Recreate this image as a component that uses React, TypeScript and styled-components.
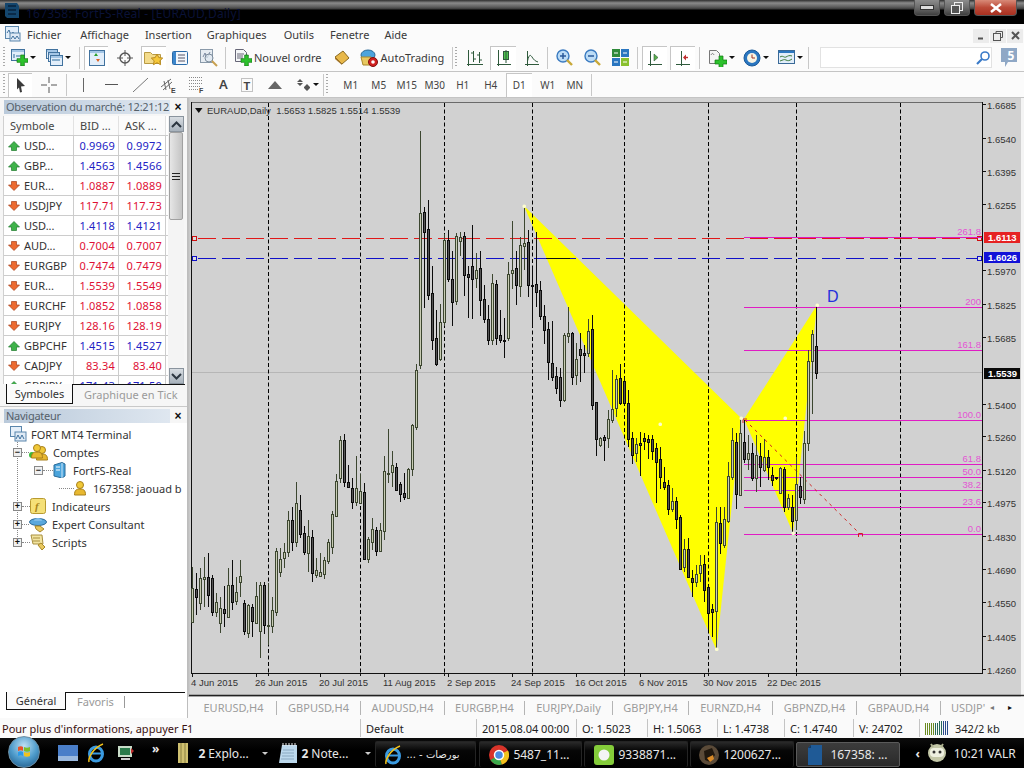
import React from "react";
import styled, { createGlobalStyle } from "styled-components";

const Global = createGlobalStyle`
  html, body { margin: 0; padding: 0; background: #fff; }
  svg { display: block; flex: none; }
`;
const UI = `"Noto Sans", "Liberation Sans", sans-serif`;

const Root = styled.div`
  width: 1024px; height: 768px; overflow: hidden; display: flex; flex-direction: column;
  font-family: ${UI}; font-size: 11px; color: #333; background: #fff;
`;
/* ---------- title ---------- */
const TitleBar = styled.div`
  height: 24px; flex: none; display: flex; align-items: flex-start; position: relative;
  background: linear-gradient(#2e2e2e 0, #8a8a8a 3px, #5c5c5c 7px, #3a3a3a 9px, #000 10px, #000 100%);
`;
const TitleText = styled.div`
  margin: 5px 0 0 6px; font-size: 12px; color: #0a1238; white-space: nowrap; letter-spacing: .2px;
`;
const WinButtons = styled.div`
  margin: 0 7px 0 auto; display: flex; gap: 4px; height: 16px;
`;
const WinBtn = styled.div<{ $w: number; $red?: boolean }>`
  width: ${p => p.$w}px; height: 16px; display: flex; align-items: center; justify-content: center;
  border: 1px solid #555; border-top: none; border-radius: 0 0 4px 4px; box-sizing: border-box;
  background: ${p => p.$red ? "linear-gradient(#d88a78,#bb4a38 50%,#a83020)" : "linear-gradient(#8c8c8c,#6c6c6c 50%,#3e3e3e)"};
`;
/* ---------- menu ---------- */
const MenuBar = styled.div`
  height: 20px; flex: none; display: flex; align-items: center; background: #fbfbfb; padding-left: 5px;
`;
const MenuItem = styled.span<{ $ml: number }>`
  margin-left: ${p => p.$ml}px; font-size: 11px; color: #3a3a3a; white-space: nowrap;
`;
const MdiBtns = styled.div`
  margin-left: auto; display: flex; gap: 1px; padding-right: 1px; margin-top: 3px;
`;
const MdiBtn = styled.div`
  width: 16px; height: 14px; background: #ececec; display: flex; align-items: center; justify-content: center;
`;
/* ---------- toolbars ---------- */
const Bar = styled.div<{ $h: number }>`
  height: ${p => p.$h}px; flex: none; display: flex; align-items: center; background: #fbfbfb;
  border-bottom: 1px solid #c4c4c4; box-sizing: border-box; position: relative;
`;
const Grip = styled.div<{ $ml: number }>`
  margin-left: ${p => p.$ml}px; width: 2px; height: 21px;
  background: repeating-linear-gradient(#aaa 0 1px, transparent 1px 3px);
`;
const Sep = styled.div<{ $ml: number }>`
  margin-left: ${p => p.$ml}px; width: 1px; height: 22px; background: #c8c8c8; flex: none;
`;
const Tool = styled.div<{ $ml: number }>`
  margin-left: ${p => p.$ml}px; display: flex; align-items: center; flex: none;
`;
const Toggle = styled.div<{ $ml: number; $w: number }>`
  margin-left: ${p => p.$ml}px; width: ${p => p.$w}px; height: 24px; box-sizing: border-box; flex: none;
  display: flex; align-items: center; justify-content: center;
  border-top: 1px solid #c6c6c6; border-left: 1px solid #c6c6c6; background: #fff;
`;
const Caret = styled.i`
  display: block; width: 0; height: 0; margin-left: 2px;
  border: 3px solid transparent; border-top: 3px solid #111; border-bottom: none;
`;
const ToolText = styled.span<{ $ml?: number }>`
  margin-left: ${p => p.$ml ?? 0}px; font-size: 11px; color: #3a3a3a; white-space: nowrap;
`;
const GlyphA = styled.span`
  font-weight: 600; font-size: 13px; color: #444; line-height: 1;
`;
const Period = styled.div<{ $w: number; $on?: boolean; $ml?: number }>`
  width: ${p => p.$w}px; height: 24px; display: flex; align-items: center; justify-content: center; flex: none;
  margin-left: ${p => p.$ml ?? 0}px;
  font-size: 10px; color: #444; box-sizing: border-box;
  ${p => p.$on ? "border-top:1px solid #c6c6c6;border-left:1px solid #c6c6c6;background:#fff;" : ""}
`;
const SearchBox = styled.div`
  position: absolute; left: 820px; top: 3px; width: 172px; height: 21px; box-sizing: border-box;
  background: #fff; border: 1px solid #e2e2e2; display: flex; align-items: center; justify-content: flex-end; padding-right: 1px;
`;
const ChatBadge = styled.div`
  position: absolute; left: 1000px; top: 4px; width: 22px; height: 21px; display: flex; align-items: flex-start; justify-content: center;
`;
const ChatNum = styled.span`
  position: absolute; top: 0; left: 0; width: 22px; text-align: center; color: #fff; font-size: 12px; font-weight: 700; line-height: 16px;
`;
/* ---------- main ---------- */
const Main = styled.div`
  height: 620px; flex: none; display: flex;
`;
const Side = styled.div`
  width: 188px; flex: none; display: flex; flex-direction: column; box-sizing: border-box; border-right: 1px solid #bdbdbd; background: #f6f6f6;
`;
const PanelHead = styled.div`
  margin-top: 2px; height: 14px; flex: none; display: flex; align-items: center; padding-left: 4px;
`;
const HeadTitle = styled.div`
  width: 166px; height: 14px; box-sizing: border-box; padding-left: 2px; line-height: 14px; font-size: 11px; color: #55606a; white-space: nowrap;
  letter-spacing: -.26px; background: linear-gradient(90deg, #b9c9da, #dfe7f0);
`;
const HeadClose = styled.div`
  margin-left: 2px; font-family: "Liberation Sans", sans-serif; font-size: 12px; font-weight: 700; color: #111; line-height: 14px; width: 12px; text-align: center;
`;
const Market = styled.div`
  height: 306px; flex: none; display: flex; flex-direction: column;
`;
const WatchArea = styled.div`
  height: 268px; margin: 2px 0 0 3px; display: flex; flex: none; overflow: hidden;
`;
const Table = styled.div`
  width: 165px; background: #fff; border-left: 1px solid #d0d0d0; box-sizing: border-box; flex: none;
`;
const Row = styled.div`
  display: grid; grid-template-columns: 70px 45px 47px; height: 20px; box-sizing: border-box; border-bottom: 1px solid #ccc;
`;
const HeadCell = styled.div`
  display: flex; align-items: center; padding-left: 6px; font-size: 11px; color: #444; border-right: 1px solid #e2e2e2; background: #fbfbfb; white-space: nowrap;
`;
const SymCell = styled.div`
  display: flex; align-items: center; gap: 4px; padding-left: 4px; font-size: 11px; color: #333; border-right: 1px solid #ccc;
`;
const NumCell = styled.div<{ $up: boolean }>`
  display: flex; align-items: center; justify-content: flex-end; padding-right: 3px; font-size: 11px; letter-spacing: .2px;
  color: ${p => p.$up ? "#2222c4" : "#de1034"}; border-right: 1px solid #ccc;
`;
const Scroll = styled.div`
  width: 16px; flex: none; display: flex; flex-direction: column; background: #f4f4f4; align-items: center;
`;
const ScrollBtn = styled.div`
  width: 15px; height: 16px; flex: none; background: linear-gradient(#d8dde2,#a8b2bc); border: 1px solid #8a949e; box-sizing: border-box; display: flex; align-items: center; justify-content: center;
`;
const Thumb = styled.div`
  width: 14px; height: 88px; flex: none; background: linear-gradient(90deg,#e6e6e6,#c4c4c4); border: 1px solid #a0a0a0; box-sizing: border-box; border-radius: 2px; margin-bottom: auto;
  display: flex; align-items: center; justify-content: center;
`;
const Tabs = styled.div`
  height: 20px; flex: none; display: flex; align-items: stretch; padding-left: 6px;
`;
const TabOn = styled.div<{ $w: number }>`
  width: ${p => p.$w}px; box-sizing: border-box; border: 1.5px solid #111; border-top: none; background: #fbfbfb; font-size: 11px; color: #333; display: flex; align-items: center; justify-content: center; flex: none;
`;
const TabRest = styled.div`
  flex: 1; border-top: 1.5px solid #111; margin-right: 2px; display: flex; align-items: center; padding-left: 11px; color: #9a9a9a; font-size: 11px; white-space: nowrap; gap: 10px;
`;
const TabBar = styled.i`
  width: 1px; height: 12px; background: #999; display: block;
`;
const Navigator = styled.div`
  flex: 1; display: flex; flex-direction: column; background: #fff; border-top: 1px solid #c9c9c9; margin-top: 2px; min-height: 0;
`;
const NavHeadWrap = styled.div`
  background: #f6f6f6; height: 16px; flex: none;
`;
const Tree = styled.div`
  flex: 1; padding-top: 2px; position: relative; min-height: 0;
`;
const TreeLine = styled.div`
  position: absolute; left: 17px; top: 10px; height: 110px; border-left: 1px dotted #888;
`;
const TreeRow = styled.div<{ $pad: number }>`
  height: 18px; display: flex; align-items: center; padding-left: ${p => p.$pad}px; white-space: nowrap; position: relative;
  font-size: 11px; color: #333;
`;
const Box = styled.div`
  width: 9px; height: 9px; box-sizing: border-box; border: 1px solid #888; background: #f0f0f0; display: flex; align-items: center; justify-content: center;
  font-size: 9px; line-height: 7px; color: #111; font-family: "Liberation Sans", sans-serif; flex: none; font-weight: 700;
`;
const Dots = styled.i<{ $w: number }>`
  display: block; width: ${p => p.$w}px; border-top: 1px dotted #888; flex: none;
`;
const TreeText = styled.span<{ $ml: number }>`
  margin-left: ${p => p.$ml}px;
`;
const NavTabs = styled.div`
  height: 18px; flex: none; display: flex; padding-left: 6px; margin-bottom: 8px;
`;
const ChartCol = styled.div`
  width: 836px; flex: none; display: flex; flex-direction: column;
`;
const ChartTabs = styled.div`
  height: 21px; flex: none; display: flex; align-items: center; background: #fafafa; position: relative;
`;
/* ---------- status ---------- */
const Status = styled.div`
  height: 20px; flex: none; display: flex; align-items: center; background: #fafafa;
`;
const StatusCell = styled.div<{ $w: number }>`
  width: ${p => p.$w}px; flex: none; height: 18px; box-sizing: border-box; padding-left: 5px; display: flex; align-items: center; gap: 6px;
  border-right: 1px solid #c4c4c4; font-size: 11px; color: #222; white-space: nowrap;
`;
const StatusFirst = styled(StatusCell)`
  padding-left: 2px; color: #3a1010;
`;
const StatusLast = styled(StatusCell)`
  border-right: none;
`;
/* ---------- taskbar ---------- */
const Taskbar = styled.div`
  height: 30px; flex: none; display: flex; align-items: center; background: linear-gradient(#0c0c0c,#000 40%); color: #eee; font-size: 12px; position: relative;
`;
const Orb = styled.div`
  margin-left: 8px; width: 32px; height: 32px; border-radius: 50%; flex: none; margin-top: -2px; display: flex; align-items: center; justify-content: center;
  background: radial-gradient(circle at 50% 30%, #bfe0f4, #4f9ccc 50%, #17507e); border: 1px solid #6c8ea4; box-sizing: border-box;
`;
const QuickIcon = styled.div<{ $ml: number }>`
  margin-left: ${p => p.$ml}px; flex: none; display: flex; align-items: center;
`;
const TaskText = styled.span<{ $ml?: number; $w?: number }>`
  margin-left: ${p => p.$ml ?? 0}px; white-space: nowrap; color: #e8e8e8; ${p => p.$w ? `width:${p.$w}px;` : ""}
`;
const Chevrons = styled(TaskText)`
  font-weight: 700; margin-top: -10px;
`;
const TrayArrow = styled(TaskText)`
  font-weight: 700;
`;
const ArabicText = styled(TaskText)`
  font-family: "DejaVu Sans", sans-serif; font-size: 10px;
`;
const TaskCaret = styled(Caret)`
  border-top-color: #ccc;
`;
const TaskBtn = styled.div<{ $ml: number; $w: number; $active?: boolean }>`
  margin-left: ${p => p.$ml}px; width: ${p => p.$w}px; height: ${p => p.$active ? 25 : 26}px; margin-top: 2px; box-sizing: border-box; flex: none;
  display: flex; align-items: center; border-radius: 2px;
  background: ${p => p.$active ? "linear-gradient(#3c3c3c,#2a2a2a)" : "linear-gradient(#2a2a2a,#060606 35%,#000)"};
  border: 1px solid ${p => p.$active ? "#5a5a5a" : "#242424"}; border-bottom: ${p => p.$active ? "1px solid #5a5a5a" : "none"};
`;

/* ---------- icons ---------- */
const Plus = ({ x = 6, y = 6, s = 10 }: { x?: number; y?: number; s?: number }) => {
  const a = s / 3;
  return <path d={`M${x + a} ${y}h${a}v${a}h${a}v${a}h-${a}v${a}h-${a}v-${a}h-${a}v-${a}h${a}z`} fill="#2cc12c" stroke="#137a13" strokeWidth=".7" />;
};
const Win = ({ x, y, w, h }: { x: number; y: number; w: number; h: number }) => (
  <g><rect x={x + .5} y={y + .5} width={w} height={h} fill="#e2eefa" stroke="#41729e" /><rect x={x + 1} y={y + 1} width={w - 1} height={2} fill="#a4c6e6" /></g>
);
const Ico = ({ s = 16, h, children }: { s?: number; h?: number; children: React.ReactNode }) => (
  <svg width={s} height={h ?? s} viewBox={`0 0 ${s} ${h ?? s}`} fill="none">{children}</svg>
);
const IconNew = () => <Ico s={17}><Win x={0} y={0} w={13} h={11} /><path d="M3 5v4M5 7h4" stroke="#2a6a9a" /><Plus x={6} y={6} s={11} /></Ico>;
const IconProfiles = () => <Ico s={17}><Win x={0} y={0} w={11} h={9} /><Win x={2} y={3} w={11} h={9} /><Win x={4} y={6} w={12} h={10} /><path d="M6 11h8" stroke="#2a6a9a" /></Ico>;
const IconMarket = () => <Ico><Win x={0} y={0} w={15} h={15} /><path d="M5 6l2-3 2 3z" fill="#2aa02a" /><path d="M7 9l2 3 2-3z" fill="#e06020" /></Ico>;
const IconCross = () => <Ico><circle cx="8" cy="8" r="5" stroke="#555" strokeWidth="1.4" /><path d="M8 0v6M8 10v6M0 8h6M10 8h6" stroke="#555" /></Ico>;
const IconFolderStar = () => <Ico s={20} h={18}><path d="M.5 3.5h6l2 2h8v9H.5z" fill="#f4dc8c" stroke="#b89a44" /><path d="M13 5l1.8 3.6 3.9.5-2.9 2.7.8 3.9-3.6-2-3.6 2 .8-3.9-2.9-2.7 3.9-.5z" fill="#f6c83a" stroke="#b88a20" /></Ico>;
const IconTerminal = () => <Ico><rect x=".5" y="1.5" width="15" height="13" rx="1" fill="#f2f6fb" stroke="#2a6aa8" /><rect x="1" y="2" width="3" height="12" fill="#3c86cc" /><path d="M6 5h7M6 8h7M6 11h7" stroke="#556" /></Ico>;
const IconTester = () => <Ico s={18}><rect x=".5" y=".5" width="12" height="13" fill="#e6ecf2" stroke="#8a9aaa" /><path d="M3 8l2-4 2 5 3-6" stroke="#7a88a0" /><circle cx="9" cy="9" r="4" fill="#dfe9f2" fillOpacity=".7" stroke="#7a8a9a" /><path d="M12 12l5 5" stroke="#c8a050" strokeWidth="2" /></Ico>;
const IconOrder = () => <Ico s={17}><path d="M.5.5h8l3 3v9H.5z" fill="#f4f6f8" stroke="#667" /><path d="M2 5h7M2 7h6M2 9h6" stroke="#667" /><Plus x={6} y={6} s={11} /></Ico>;
const IconBook = () => <Ico><path d="M1 7l8-6 6 7-7 6z" fill="#e8b84a" stroke="#8a6a20" /><path d="M1 7l7 7v1L1 9z" fill="#a6762a" /></Ico>;
const IconAuto = () => <Ico s={18}><ellipse cx="8" cy="6" rx="7" ry="5" fill="#4ca4dc" stroke="#2a6a98" /><path d="M1 8h10v8H3z" fill="#e8c860" stroke="#a88828" /><circle cx="13" cy="13" r="4.5" fill="#d02020" stroke="#801010" /><circle cx="13" cy="13" r="1.8" fill="#fff" /></Ico>;
const IconBars = () => <Ico><path d="M0 14.500h16M1.500 0v16M6.500 1v11M4 3h2.500M6.500 9H9M12.500 2v11M10 5h2.500M12.500 10H15" stroke="#2f5a3c" /></Ico>;
const IconCandle = () => <Ico s={14} h={16}><path d="M0 14.500h14M1.500 0v16" stroke="#2f5a3c" /><rect x="6.500" y="1.500" width="5" height="8" fill="#4ec24e" stroke="#2f5a3c" /><path d="M9 0v13" stroke="#2f5a3c" /></Ico>;
const IconLine = () => <Ico s={14} h={16}><path d="M0 14.500h14M2.500 1v15" stroke="#2f5a3c" /><path d="M2.500 11C4 5 5 4 7 7s3 4 6 5" stroke="#2f5a3c" /></Ico>;
const IconZoom = ({ plus }: { plus?: boolean }) => <Ico s={17}><circle cx="7" cy="7" r="6" fill="#bcdcf6" stroke="#3a7ac0" strokeWidth="1.4" /><path d={plus ? "M4 7h6M7 4v6" : "M4 7h6"} stroke="#2a5a9a" strokeWidth="1.5" /><path d="M11 11l5 5" stroke="#c8a838" strokeWidth="2.400" /></Ico>;
const IconTile = () => <Ico s={17}><rect x="0" y="0" width="8" height="8" fill="#2f8a3a" /><rect x="9" y="0" width="8" height="8" fill="#2a76c0" /><rect x="0" y="9" width="8" height="8" fill="#2a76c0" /><rect x="9" y="9" width="8" height="8" fill="#8ac02f" /><path d="M2 4h4M11 4h4M2 13h4M11 13h4" stroke="#fff" /></Ico>;
const IconScrollR = () => <Ico s={14} h={16}><path d="M0 14.500h14M2.500 1v15" stroke="#2f5a3c" /><path d="M6 4v7l4-3.500z" fill="#5ab04a" stroke="#2f5a3c" strokeWidth=".6" /></Ico>;
const IconShift = () => <Ico s={14} h={16}><path d="M0 14.500h14M5.500 1v15" stroke="#2f5a3c" /><path d="M12 7.500H8" stroke="#c03030" strokeWidth="1.4" /><path d="M7 7.500l3-3v6z" fill="#c03030" /></Ico>;
const IconTemplate = () => <Ico s={18}><path d="M.5 1.500h7l3 3v10H.5z" fill="#f4f4f4" stroke="#777" /><path d="M2 6c1-2 2-2 3 0" stroke="#777" /><Plus x={6} y={7} s={12} /></Ico>;
const IconClock = () => <Ico s={18}><circle cx="9" cy="9" r="8" fill="#2a76c0" stroke="#1a5a9a" /><circle cx="9" cy="9" r="5" fill="#f8f4e4" /><path d="M9 5.500V9h3" stroke="#a03020" /></Ico>;
const IconIndic = () => <Ico s={17}><rect x=".5" y="1.500" width="16" height="13" fill="#e2eefa" stroke="#3a6a98" /><rect x="1" y="2" width="15" height="2" fill="#2a76c0" /><path d="M2 8c3-2 4 1 6 0s3-2 6-1M2 12c3-1 4-2 6-1s3 1 6-1" stroke="#3a7a3a" /></Ico>;
const IconSearch = () => <Ico s={14}><circle cx="9" cy="5" r="4" stroke="#3a7ac8" strokeWidth="1.6" /><path d="M6 8l-5 5" stroke="#3a7ac8" strokeWidth="2.200" /></Ico>;
const IconChat = () => <Ico s={22} h={21}><path d="M1 0h16v14h-9l-3 5v-5H1z" fill="#8fa8c6" /></Ico>;
const IconCursor = () => <Ico s={10} h={16}><path d="M1 1l8 8-4 .5L6 15l-2 .5-1-5-2 2z" fill="#3a3a3a" /></Ico>;
const IconPlusThin = () => <Ico><path d="M8 0v6M8 10v6M0 8h6M10 8h6" stroke="#555" /></Ico>;
const IconVLine = () => <Ico s={3} h={14}><path d="M1.500 0v14" stroke="#666" /></Ico>;
const IconHLine = () => <Ico s={13} h={3}><path d="M0 1.500h13" stroke="#555" /></Ico>;
const IconTrend = () => <Ico s={15} h={14}><path d="M0 14L15 0" stroke="#777" /></Ico>;
const IconChannel = () => <Ico s={16}><path d="M0 10L10 2M2 13l9-8M3 4l2 9M7 3l2 9" stroke="#666" /><text x="10" y="15.500" fontSize="7" fontWeight="700" fill="#444" fontFamily="Liberation Sans">E</text></Ico>;
const IconFibo = () => <Ico s={16}><path d="M0 .5h14M0 3.500h14M0 6.500h14M0 9.500h12M0 12.500h10" stroke="#888" strokeDasharray="1 1" /><text x="10" y="16" fontSize="7" fontWeight="700" fill="#444" fontFamily="Liberation Sans">F</text></Ico>;
const IconT = () => <Ico s={12} h={14}><rect x=".5" y=".5" width="11" height="13" stroke="#888" strokeDasharray="1 1" /><text x="2.500" y="11.500" fontSize="11" fontWeight="700" fill="#444" fontFamily="Liberation Sans">T</text></Ico>;
const IconTri = () => <Ico s={14} h={8}><path d="M0 8L7 0l7 8z" fill="#666" /></Ico>;
const IconMarks = () => <Ico s={14}><path d="M0 4l3-3 3 3zM0 5h6L3 8zM7 9l3-3 3 3v1l-3 3-3-3z" fill="#555" /></Ico>;
const IconMenu = () => <Ico><rect x=".5" y=".5" width="13" height="12" fill="#e2eefa" stroke="#5a86ac" /><path d="M2 7l2-3 2 5 2-3 2 4" stroke="#41729e" /><rect x="5" y="7" width="10" height="8" fill="#dfeaf5" stroke="#5a86ac" /><path d="M6 13l2-3 2 3 2-3 2 3" stroke="#41729e" /></Ico>;
const Up = () => <Ico s={12}><path d="M6 1.500l5.500 5.500H8.500v3.500h-5V7H.5z" fill="#3fb34a" stroke="#1f7a2e" strokeWidth=".7" /></Ico>;
const Down = () => <Ico s={12}><path d="M6 10.500L.5 5h3V1.500h5V5h3z" fill="#ec6a30" stroke="#a8401a" strokeWidth=".7" /></Ico>;
const Chev = ({ up }: { up?: boolean }) => <Ico s={11} h={7}><path d={up ? "M1 6l4.500-4.500L10 6" : "M1 1l4.500 4.500L10 1"} stroke="#2c3640" strokeWidth="2" /></Ico>;
const NavMt = () => <Ico s={17}><rect x=".5" y=".5" width="11" height="10" fill="#e6f0fa" stroke="#5a86ac" /><rect x="5" y="6" width="11" height="9" fill="#dfeaf5" stroke="#5a86ac" /><path d="M6 13l2-4 2 4 2-4 2 4" stroke="#41729e" /></Ico>;
const Person = ({ x = 0, y = 0 }: { x?: number; y?: number }) => <g transform={`translate(${x} ${y})`}><circle cx="6" cy="4" r="3.500" fill="#f0c838" stroke="#a8801c" /><path d="M.5 14c0-5 2-6 5.500-6s5.500 1 5.500 6z" fill="#e8b830" stroke="#a8801c" /></g>;
const NavAcc = () => <Ico s={19} h={17}><circle cx="3" cy="11" r="3" fill="#3cba3c" /><Person x={7} y={2} /><Person x={2} y={0} /></Ico>;
const NavServer = () => <Ico s={13} h={16}><path d="M1 3l8-2.500 3 1.500v12l-3 2-8-2z" fill="#4aa4dc" stroke="#2a6a98" /><path d="M9 1v15" stroke="#cfe6f8" /><path d="M3 5h4M3 8h4" stroke="#fff" /></Ico>;
const NavUser = () => <Ico s={13} h={15}><Person x={0} y={0} /></Ico>;
const NavInd = () => <Ico s={16}><rect x=".5" y=".5" width="15" height="15" rx="2" fill="#f5e078" stroke="#b89a30" /><text x="5" y="12" fontSize="11" fontStyle="italic" fontWeight="700" fill="#a88418" fontFamily="Liberation Serif">f</text></Ico>;
const NavExpert = () => <Ico s={19} h={17}><ellipse cx="9" cy="6" rx="8.500" ry="3.500" fill="#5aa8dc" stroke="#2a6a98" /><path d="M5 5c0-4 8-4 8 0z" fill="#7fbce8" /><path d="M6 10l5 0 4 3-4 3-4-3z" fill="#e8c860" stroke="#a88828" /></Ico>;
const NavScript = () => <Ico s={16} h={17}><path d="M1 1h11l1 9H3z" fill="#f2e4a0" stroke="#a88f40" /><path d="M3 4h7M3 7h7" stroke="#a88f40" /><path d="M8 11l3-2 4 4-3 3z" fill="#e8c860" stroke="#a88828" /></Ico>;
const OrbFlag = () => <Ico s={14}><path d="M1 2c2-1 4-1 5 0v4c-1-1-3-1-5 0z" fill="#e8532a" /><path d="M7 2c2 1 4 1 6 0v4c-2 1-4 1-6 0z" fill="#7bbf2a" /><path d="M1 7c2-1 4-1 5 0v4c-1-1-3-1-5 0z" fill="#2a9ae8" /><path d="M7 7c2 1 4 1 6 0v4c-2 1-4 1-6 0z" fill="#f2c21c" /></Ico>;
const TbMonitor = () => <Ico s={20} h={16}><rect width="20" height="16" fill="#4a7ec8" /><rect y="11" width="20" height="5" fill="#9ab8de" /></Ico>;
const TbIE = () => <Ico s={18} h={20}><ellipse cx="9" cy="11" rx="6.500" ry="7" stroke="#3a9ae0" strokeWidth="3" /><path d="M3 10.500h12" stroke="#3a9ae0" strokeWidth="2" /><path d="M2 19C1 15 6 5 16 1" stroke="#f2c21c" strokeWidth="1.500" /></Ico>;
const TbScreen = () => <Ico><rect y="1" width="14" height="11" fill="#c8dcc8" /><rect x="2" y="3" width="10" height="7" fill="#2a7a4a" /><rect x="3" y="13" width="9" height="2" fill="#ccc" /><path d="M13 3l3 3-3 3z" fill="#c03030" /></Ico>;
const TbFolder = () => <Ico s={12} h={22}><rect x="1" y="1" width="10" height="20" fill="#cfc070" /><path d="M4 1v20M8 1v20" stroke="#8a8040" /></Ico>;
const TbNote = () => <Ico s={19} h={22}><path d="M3 3h15v18H0z" fill="#bcd8ec" /><path d="M4 1v3M7 1v3M10 1v3M13 1v3M16 1v3" stroke="#eee" /><path d="M4 8h11M3 11h12M3 14h12M2 17h13" stroke="#8aa8c0" /></Ico>;
const TbChrome = () => <Ico s={20}><circle cx="10" cy="10" r="10" fill="#d8342a" /><path d="M10 10L1.500 15A10 10 0 0 0 13 19.500z" fill="#3aa84a" /><path d="M10 10l3 9.500A10 10 0 0 0 19 5.500z" fill="#f2c21c" /><circle cx="10" cy="10" r="4.500" fill="#4a8ae0" stroke="#fff" strokeWidth="1.500" /></Ico>;
const TbGreen = () => <Ico s={20}><rect width="20" height="20" rx="3" fill="#84cc3a" /><circle cx="10" cy="10" r="5.500" fill="#f4f4f4" /></Ico>;
const TbPhoto = () => <Ico s={20}><circle cx="10" cy="10" r="10" fill="#5a4a38" /><path d="M5 6l8-3 3 7-5 7-5-2z" fill="#20180f" /><path d="M8 13l6-3 1 4-4 3z" fill="#d88a28" /></Ico>;
const TbDoc = () => <Ico s={16} h={22}><path d="M4 2h11v20H1V5z" fill="#1f5a96" /><path d="M4 2v3H1z" fill="#123a66" /></Ico>;
const TbSmile = () => <Ico s={20}><circle cx="10" cy="10" r="9" fill="#c4c8a8" /><rect x="3" y="5" width="14" height="9" rx="4" fill="#eef0e0" /><circle cx="7" cy="9" r="1.500" fill="#333" /><circle cx="13" cy="9" r="1.500" fill="#333" /><path d="M4 1l2 3M16 1l-2 3" stroke="#aeb290" strokeWidth="2" /></Ico>;
const TbSig = () => <Ico s={24} h={14}>{Array.from({ length: 12 }).map((_, i) => <rect key={i} x={i * 2} y={i < 7 ? 2 : 0} width="1" height={i < 7 ? 12 : 14} fill={i < 5 ? "#6a8a20" : i < 9 ? "#2a6a5a" : "#2a4a8a"} />)}</Ico>;

/* ---------- chart data ---------- */
type C = [number, number, number, number, number];
const Z8: C[] = [[560,625,725,730,1],[580,628,652,705,0],[565,595,668,690,1],[530,590,597,680,1],[518,590,645,680,0],[585,595,695,708,0],[640,665,695,712,1],[652,685,730,758,1],[618,688,700,742,0],[565,615,710,710,1],[540,615,665,690,0],[590,637,662,675,1],[540,587,607,650,1],[660,670,752,765,0],[672,676,758,775,1],[672,682,722,772,0],[605,648,728,732,1],[605,615,752,835,1],[605,615,735,762,0],[610,735,738,795,1],[650,690,738,758,1],[505,513,697,708,1],[505,537,575,590,1],[490,515,535,563,1],[393,420,515,530,1],[380,420,485,513,0],[307,370,487,500,1],[345,390,462,475,0],[438,460,515,525,0],[420,468,518,575,1],[450,472,578,605,0],[535,570,585,595,1],[520,577,587,592,1],[530,540,583,597,1],[478,486,542,552,1],[392,403,500,522,1],[282,304,409,410,1],[168,181,293,310,1],[163,181,307,320,0],[255,307,320,325,0],[295,325,365,387,0],[228,325,365,378,1],[282,334,368,372,1],[310,337,537,540,0],[470,478,538,550,1],[415,448,486,510,1],[440,450,513,528,0],[430,450,512,515,1],[228,274,452,480,1],[148,278,279,308,1],[213,256,275,322,1],[250,262,329,330,0],[305,313,343,365,0],[280,340,350,360,0],[265,267,353,355,1],[132,135,268,288,1]];
const Z7: C[] = [[798,817,986,996,1],[98,345,800,812,1],[327,342,403,630,0],[307,393,590,605,0],[505,585,727,755,0],[637,720,797,803,0],[618,672,782,790,1],[408,425,673,685,1],[395,425,542,552,0],[460,543,613,685,0],[405,415,610,620,1],[403,417,430,475,1],[403,415,532,595,0],[505,528,536,660,0],[380,505,542,662,0],[465,515,540,570,1],[458,510,607,655,0],[560,603,662,675,0],[620,662,725,740,0]];
const Z9: C[] = [[252,280,450,465,1],[270,283,443,465,0],[360,436,450,458,0],[385,450,452,505,0],[215,253,443,452,1],[92,240,250,298,1],[183,235,285,345,0],[140,165,287,320,1],[52,160,168,240,1],[120,155,285,320,0],[230,285,287,410,0],[125,283,305,350,0],[272,300,378,390,0],[345,378,420,462,0],[395,418,516,570,0],[393,520,560,572,0],[530,557,595,612,0],[535,562,630,650,0],[430,435,630,635,1],[350,430,437,458,1],[425,430,560,585,0],[458,508,555,585,1],[430,477,494,577,0],[465,490,494,548,0],[388,423,490,500,1],[375,418,645,660,0],[635,635,748,797,0],[740,743,765,770,1],[735,740,750,812,0],[660,688,745,775,1],[540,658,690,700,1],[555,567,655,680,1],[522,565,640,645,0],[560,573,640,648,0]];
const Z11: C[] = [[-30,10,118,140,0],[97,115,165,193,0],[115,132,158,185,1],[97,130,134,228,0],[100,113,122,150,0],[105,116,125,178,0],[105,117,152,180,0],[130,145,185,308,0],[140,176,230,268,0],[200,247,260,270,0],[240,256,326,345,0],[265,304,326,335,1],[292,304,356,388,0],[345,352,508,510,0],[418,448,500,515,1],[415,448,530,535,0],[510,533,545,590,0],[495,522,545,560,1],[465,495,518,545,1],[465,492,570,605,0],[555,562,638,690,0],[612,628,635,710,0],[320,367,632,745,1],[322,369,430,462,0],[322,358,435,445,1],[185,228,362,370,1],[85,120,230,240,1],[100,125,282,328,0],[55,98,284,285,1],[60,125,177,190,0],[105,158,178,210,1],[130,160,235,243,0],[105,165,235,275,1],[130,168,200,260,0],[118,170,210,215,1],[150,172,200,240,0],[200,225,240,258,0],[230,232,234,240,0],[200,205,278,280,1],[200,207,322,335,0],[282,295,322,330,1],[285,322,362,395,0],[170,252,360,390,1],[230,257,290,312,0],[92,128,297,312,1]];
const conv = (a: C[], off: number): C[] => a.map(c => [off + c[0] / 3, off + c[1] / 3, off + c[2] / 3, off + c[3] / 3, c[4]] as C);
const CANDLES: C[] = [...conv(Z8, 380), ...conv(Z7, 98), ...conv(Z9, 190), ...conv(Z11, 400), [350, 361, 443, 451, 1], [330, 334, 361, 414, 1], [304, 346, 373, 379, 0]];
const VDASH = [268, 360, 444, 532, 624, 708, 796, 900];
const PRICES: [string, number][] = [["1.6685",105],["1.6540",139],["1.6395",172],["1.6255",205],["1.5970",271],["1.5825",305],["1.5685",338],["1.5400",405],["1.5260",437],["1.5120",471],["1.4975",503],["1.4830",537],["1.4690",570],["1.4550",603],["1.4405",637],["1.4260",670]];
const FIBS: [string, number][] = [["261.8",237.5],["200",307.5],["161.8",350.5],["100.0",420.5],["61.8",464.5],["50.0",477.5],["38.2",490.5],["23.6",507.5],["0.0",534.5]];
const DATES: [string, number][] = [["4 Jun 2015",191],["26 Jun 2015",255],["20 Jul 2015",319],["11 Aug 2015",383],["2 Sep 2015",447],["24 Sep 2015",511],["16 Oct 2015",575],["6 Nov 2015",639],["30 Nov 2015",703],["22 Dec 2015",767]];
const AX = `"Liberation Sans", sans-serif`;

const PriceTag = ({ y, v, bg }: { y: number; v: string; bg: string }) => (
  <g><rect x="984" y={y - 5} width="36" height="11" fill={bg} /><text x="988" y={y + 4} fill="#fff" fontSize="9.500" fontWeight="700" fontFamily={AX}>{v}</text></g>
);
const Chart = () => (
  <svg width="836" height="599" viewBox="188 98 836 599" style={{ background: "#d1d1d1" }}>
    <rect x="188" y="98" width="1.500" height="599" fill="#c0c0c0" />
    <path d="M1022.500 98v599" stroke="#f4f4f4" strokeWidth="3" />
    <path d="M191 102.500h792" stroke="#6a6a6a" />
    <path d="M191.500 102v571M982.500 102v571M191 673.500h792" stroke="#111" />
    <path d="M192 372.500h790" stroke="#b6b6b6" />
    <polygon points="524,206 741,418 716.500,650" fill="#ffff00" />
    <polygon points="744,419 817,305 793,533" fill="#ffff00" />
    {VDASH.map(x => <path key={x} d={`M${x + .5} 103v570`} stroke="#000" strokeDasharray="4 2.500" />)}
    <path d="M192 238.500h790" stroke="#e01818" strokeDasharray="18 6" strokeDashoffset="-6" />
    <path d="M192 258.500h790" stroke="#1010c8" strokeDasharray="18 6" strokeDashoffset="-6" />
    <path d="M546 258.500h24" stroke="#111" />
    <rect x="192.500" y="236.500" width="4" height="4" fill="#ddd" stroke="#d01010" />
    <rect x="192.500" y="256.500" width="4" height="4" fill="#ddd" stroke="#1010c8" />
    <rect x="977.500" y="236.500" width="4" height="4" fill="#ddd" stroke="#d01010" />
    <rect x="977.500" y="256.500" width="4" height="4" fill="#ddd" stroke="#1010c8" />
    {FIBS.map(([t, y]) => (
      <g key={t}>
        <path d={`M744 ${y}h238`} stroke="#e01cc4" />
        <text x="981" y={y - 3} textAnchor="end" fontSize="9.500" fill="#e454d4" fontFamily={AX}>{t}</text>
      </g>
    ))}
    <path d="M745 420L860 534" stroke="#d02020" strokeDasharray="3 4" fill="none" />
    <path d="M743 423v-4h4M858.500 537v-3.500h4v3" stroke="#d02020" fill="none" />
    {CANDLES.map((c, i) => {
      const x = 192 + 4 * i;
      const up = c[4] === 1;
      const col = up ? "#3c4630" : "#0c0c0c";
      const top = Math.round(c[1]), bot = Math.max(Math.round(c[2]), top + 1);
      return (
        <g key={i}>
          <path d={`M${x + .5} ${Math.round(c[0])}V${Math.round(c[3])}`} stroke={col} />
          <rect x={x - .5} y={top + .5} width="2" height={bot - top} fill={up ? "#c8ccb4" : "#555"} stroke={col} />
        </g>
      );
    })}
    {[[524, 206], [741, 418], [716.500, 649], [660, 424], [785, 418], [793, 533], [817, 305]].map(([x, y], i) => <rect key={i} x={x - 1.500} y={y - 1.500} width="3.500" height="3.500" rx="1.500" fill="#fdfdd0" />)}
    <text x="827" y="302" fontSize="16" fill="#2430dc" fontFamily={AX}>D</text>
    <path d="M195 108h7.500l-3.750 5z" fill="#111" />
    <text x="207" y="114" fontSize="9.500" fill="#333" fontFamily={AX} xmlSpace="preserve">EURAUD,Daily  1.5653 1.5825 1.5514 1.5539</text>
    {PRICES.map(([t, y]) => (
      <g key={t}><path d={`M983 ${y - .5}h3`} stroke="#111" /><text x="987" y={y + 3.500} fontSize="9.500" fill="#333" fontFamily={AX}>{t}</text></g>
    ))}
    <PriceTag y={237} v="1.6113" bg="#e62222" />
    <PriceTag y={257} v="1.6026" bg="#1212d8" />
    <PriceTag y={373} v="1.5539" bg="#0a0a0a" />
    {DATES.map(([t, x]) => (
      <g key={t}><path d={`M${x + 1.500} 674v3`} stroke="#111" /><text x={x} y="686" fontSize="9.500" fill="#333" fontFamily={AX}>{t}</text></g>
    ))}
    {VDASH.map(x => <path key={x} d={`M${x + .5} 674v2`} stroke="#111" />)}
    <path d="M189 695.500h835" stroke="#222" strokeWidth="1.500" />
  </svg>
);

const ROWS: [string, string, string, boolean][] = [["USD...","0.9969","0.9972",true],["GBP...","1.4563","1.4566",true],["EUR...","1.0887","1.0889",false],["USDJPY","117.71","117.73",false],["USD...","1.4118","1.4121",true],["AUD...","0.7004","0.7007",false],["EURGBP","0.7474","0.7479",false],["EUR...","1.5539","1.5549",false],["EURCHF","1.0852","1.0858",false],["EURJPY","128.16","128.19",false],["GBPCHF","1.4515","1.4527",true],["CADJPY","83.34","83.40",false],["GBPJPY","171.43","171.50",true]];
const MENUS: [string, number][] = [["Fichier",6],["Affichage",19],["Insertion",16],["Graphiques",15],["Outils",17],["Fenetre",16],["Aide",15]];

const TabCell = styled.div<{ $w: number; $pad?: number }>`
  width: ${p => p.$w}px; flex: none; box-sizing: border-box; height: 14px; line-height: 14px; text-align: center; border-right: 1px solid #b4b4b4;
  padding-left: ${p => p.$pad ?? 0}px; color: #9c9c9c; font-size: 11px; white-space: nowrap;
`;
const TabEnd = styled.div`
  margin-left: 10px; color: #9c9c9c; font-size: 11px; width: 38px; overflow: hidden; white-space: nowrap;
`;
const TabArrows = styled.div`
  margin-left: 1px; display: flex; gap: 14px; font-size: 8px; font-family: "DejaVu Sans", sans-serif; color: #777;
`;
const TabArrowDark = styled.span` color: #111; `;

export default function App() {
  return (
    <Root>
      <Global />
      <TitleBar>
        <Tool $ml={4}><svg width="16" height="18" viewBox="0 0 16 18"><path d="M1 3h12l2 3v12H3l-2-2z" fill="#14466e" /><path d="M4 6h8M4 10h8M4 14h8" stroke="#0a2a48" strokeWidth="2" /></svg></Tool>
        <TitleText>167358: FortFS-Real - [EURAUD,Daily]</TitleText>
        <WinButtons>
          <WinBtn $w={26}><svg width="14" height="5"><rect x=".5" y=".5" width="13" height="4" fill="#ddd" stroke="#333" /></svg></WinBtn>
          <WinBtn $w={26}><svg width="12" height="12" fill="none"><rect x="3.500" y=".5" width="8" height="8" stroke="#eee" /><rect x=".5" y="3.500" width="8" height="8" fill="#555" stroke="#eee" /></svg></WinBtn>
          <WinBtn $w={43} $red><svg width="12" height="10"><path d="M1 1l10 8M11 1L1 9" stroke="#fff" strokeWidth="2.500" /></svg></WinBtn>
        </WinButtons>
      </TitleBar>

      <MenuBar>
        <IconMenu />
        {MENUS.map(([t, m]) => <MenuItem key={t} $ml={m}>{t}</MenuItem>)}
        <MdiBtns>
          <MdiBtn><svg width="8" height="8"><path d="M1 6.500h5" stroke="#555" strokeWidth="2" /></svg></MdiBtn>
          <MdiBtn><svg width="10" height="10" fill="none"><path d="M3 2.500V.5h6.500v6H7.500" stroke="#555" /><rect x=".5" y="2.500" width="7" height="7" stroke="#555" /></svg></MdiBtn>
          <MdiBtn><svg width="9" height="9"><path d="M1 1l7 7M8 1L1 8" stroke="#555" strokeWidth="2" /></svg></MdiBtn>
        </MdiBtns>
      </MenuBar>

      <Bar $h={28}>
        <Grip $ml={3} />
        <Tool $ml={6}><IconNew /><Caret /></Tool>
        <Tool $ml={10}><IconProfiles /><Caret /></Tool>
        <Sep $ml={8} />
        <Toggle $ml={4} $w={24}><IconMarket /></Toggle>
        <Tool $ml={9}><IconCross /></Tool>
        <Toggle $ml={8} $w={25}><IconFolderStar /></Toggle>
        <Tool $ml={6}><IconTerminal /></Tool>
        <Tool $ml={12}><IconTester /></Tool>
        <Sep $ml={7} />
        <Tool $ml={9}><IconOrder /><ToolText $ml={2}>Nouvel ordre</ToolText></Tool>
        <Tool $ml={12}><IconBook /></Tool>
        <Tool $ml={10}><IconAuto /><ToolText $ml={3}>AutoTrading</ToolText></Tool>
        <Sep $ml={8} />
        <Grip $ml={2} />
        <Tool $ml={10}><IconBars /></Tool>
        <Toggle $ml={7} $w={26}><IconCandle /></Toggle>
        <Tool $ml={9}><IconLine /></Tool>
        <Sep $ml={8} />
        <Tool $ml={8}><IconZoom plus /></Tool>
        <Tool $ml={11}><IconZoom /></Tool>
        <Tool $ml={11}><IconTile /></Tool>
        <Sep $ml={8} />
        <Toggle $ml={4} $w={25}><IconScrollR /></Toggle>
        <Toggle $ml={3} $w={25}><IconShift /></Toggle>
        <Sep $ml={4} />
        <Tool $ml={9}><IconTemplate /><Caret /></Tool>
        <Tool $ml={8}><IconClock /><Caret /></Tool>
        <Tool $ml={9}><IconIndic /><Caret /></Tool>
        <Sep $ml={5} />
        <SearchBox><IconSearch /></SearchBox>
        <ChatBadge><IconChat /><ChatNum>5</ChatNum></ChatBadge>
      </Bar>

      <Bar $h={26}>
        <Grip $ml={3} />
        <Toggle $ml={3} $w={24}><IconCursor /></Toggle>
        <Tool $ml={9}><IconPlusThin /></Tool>
        <Sep $ml={9} />
        <Tool $ml={15}><IconVLine /></Tool>
        <Tool $ml={20}><IconHLine /></Tool>
        <Tool $ml={15}><IconTrend /></Tool>
        <Tool $ml={13}><IconChannel /></Tool>
        <Tool $ml={12}><IconFibo /></Tool>
        <Tool $ml={14}><GlyphA>A</GlyphA></Tool>
        <Tool $ml={13}><IconT /></Tool>
        <Tool $ml={15}><IconTri /></Tool>
        <Tool $ml={15}><IconMarks /><Caret /></Tool>
        <Sep $ml={4} />
        <Grip $ml={2} />
        <Period $w={28} $ml={9}>M1</Period>
        <Period $w={28}>M5</Period>
        <Period $w={28}>M15</Period>
        <Period $w={28}>M30</Period>
        <Period $w={28}>H1</Period>
        <Period $w={28}>H4</Period>
        <Period $w={26} $on $ml={1}>D1</Period>
        <Period $w={28} $ml={2}>W1</Period>
        <Period $w={26}>MN</Period>
        <Sep $ml={3} />
      </Bar>

      <Main>
        <Side>
          <Market>
            <PanelHead><HeadTitle>Observation du marché: 12:21:12</HeadTitle><HeadClose>×</HeadClose></PanelHead>
            <WatchArea>
              <Table>
                <Row><HeadCell>Symbole</HeadCell><HeadCell>BID ...</HeadCell><HeadCell>ASK ...</HeadCell></Row>
                {ROWS.map((r, i) => (
                  <Row key={i}>
                    <SymCell>{r[3] ? <Up /> : <Down />}{r[0]}</SymCell>
                    <NumCell $up={r[3]}>{r[1]}</NumCell>
                    <NumCell $up={r[3]}>{r[2]}</NumCell>
                  </Row>
                ))}
              </Table>
              <Scroll>
                <ScrollBtn><Chev up /></ScrollBtn>
                <Thumb><svg width="8" height="7"><path d="M0 .5h8M0 3.500h8M0 6.500h8" stroke="#222" /></svg></Thumb>
                <ScrollBtn><Chev /></ScrollBtn>
              </Scroll>
            </WatchArea>
            <Tabs>
              <TabOn $w={67}>Symboles</TabOn>
              <TabRest>Graphique en Tick</TabRest>
            </Tabs>
          </Market>
          <Navigator>
            <NavHeadWrap>
              <PanelHead><HeadTitle>Navigateur</HeadTitle><HeadClose>×</HeadClose></PanelHead>
            </NavHeadWrap>
            <Tree>
              <TreeLine />
              <TreeRow $pad={10}><NavMt /><TreeText $ml={4}>FORT MT4 Terminal</TreeText></TreeRow>
              <TreeRow $pad={13}><Box>−</Box><Dots $w={7} /><NavAcc /><TreeText $ml={5}>Comptes</TreeText></TreeRow>
              <TreeRow $pad={34}><Box>−</Box><Dots $w={10} /><NavServer /><TreeText $ml={7}>FortFS-Real</TreeText></TreeRow>
              <TreeRow $pad={59}><Dots $w={15} /><NavUser /><TreeText $ml={6}>167358: jaouad b</TreeText></TreeRow>
              <TreeRow $pad={13}><Box>+</Box><Dots $w={8} /><NavInd /><TreeText $ml={6}>Indicateurs</TreeText></TreeRow>
              <TreeRow $pad={13}><Box>+</Box><Dots $w={7} /><NavExpert /><TreeText $ml={4}>Expert Consultant</TreeText></TreeRow>
              <TreeRow $pad={13}><Box>+</Box><Dots $w={8} /><NavScript /><TreeText $ml={6}>Scripts</TreeText></TreeRow>
            </Tree>
            <NavTabs>
              <TabOn $w={60}>Général</TabOn>
              <TabRest>Favoris<TabBar /></TabRest>
            </NavTabs>
          </Navigator>
        </Side>
        <ChartCol>
          <Chart />
          <ChartTabs>
            <TabCell $w={89} $pad={3}>EURUSD,H4</TabCell>
            <TabCell $w={84}>GBPUSD,H4</TabCell>
            <TabCell $w={84}>AUDUSD,H4</TabCell>
            <TabCell $w={80}>EURGBP,H4</TabCell>
            <TabCell $w={88}>EURJPY,Daily</TabCell>
            <TabCell $w={76}>GBPJPY,H4</TabCell>
            <TabCell $w={84}>EURNZD,H4</TabCell>
            <TabCell $w={84}>GBPNZD,H4</TabCell>
            <TabCell $w={84}>GBPAUD,H4</TabCell>
            <TabEnd>USDJP'</TabEnd>
            <TabArrows><span>◂</span><TabArrowDark>▸</TabArrowDark></TabArrows>
          </ChartTabs>
        </ChartCol>
      </Main>

      <Status>
        <StatusFirst $w={361}>Pour plus d'informations, appuyer F1</StatusFirst>
        <StatusCell $w={116}>Default</StatusCell>
        <StatusCell $w={100}>2015.08.04 00:00</StatusCell>
        <StatusCell $w={71}>O: 1.5023</StatusCell>
        <StatusCell $w={70}>H: 1.5063</StatusCell>
        <StatusCell $w={67}>L: 1.4738</StatusCell>
        <StatusCell $w={69}>C: 1.4740</StatusCell>
        <StatusCell $w={66}>V: 24702</StatusCell>
        <StatusLast $w={104}><TbSig />342/2 kb</StatusLast>
      </Status>

      <Taskbar>
        <Orb><OrbFlag /></Orb>
        <QuickIcon $ml={18}><TbMonitor /></QuickIcon>
        <QuickIcon $ml={9}><TbIE /></QuickIcon>
        <QuickIcon $ml={13}><TbScreen /></QuickIcon>
        <Chevrons $ml={18}>»</Chevrons>
        <QuickIcon $ml={18}><TbFolder /></QuickIcon>
        <TaskText $ml={9} $w={62}><b>2</b> Explo...</TaskText>
        <TaskCaret />
        <QuickIcon $ml={11}><TbNote /></QuickIcon>
        <TaskText $ml={3} $w={62}><b>2</b> Note...</TaskText>
        <TaskCaret />
        <TaskBtn $ml={4} $w={101}>
          <QuickIcon $ml={8}><TbIE /></QuickIcon>
          <ArabicText $ml={4}>... - بورصات</ArabicText>
        </TaskBtn>
        <TaskBtn $ml={3} $w={103}>
          <QuickIcon $ml={9}><TbChrome /></QuickIcon>
          <TaskText $ml={4}>5487_11...</TaskText>
        </TaskBtn>
        <TaskBtn $ml={2} $w={104}>
          <QuickIcon $ml={9}><TbGreen /></QuickIcon>
          <TaskText $ml={4}>9338871...</TaskText>
        </TaskBtn>
        <TaskBtn $ml={2} $w={104}>
          <QuickIcon $ml={8}><TbPhoto /></QuickIcon>
          <TaskText $ml={4}>1200627...</TaskText>
        </TaskBtn>
        <TaskBtn $ml={2} $w={104} $active>
          <QuickIcon $ml={10}><TbDoc /></QuickIcon>
          <TaskText $ml={7}>167358: ...</TaskText>
        </TaskBtn>
        <TrayArrow $ml={15}>‹</TrayArrow>
        <QuickIcon $ml={7}><TbSmile /></QuickIcon>
        <TaskText $ml={7}>10:21 VALR</TaskText>
      </Taskbar>
    </Root>
  );
}
